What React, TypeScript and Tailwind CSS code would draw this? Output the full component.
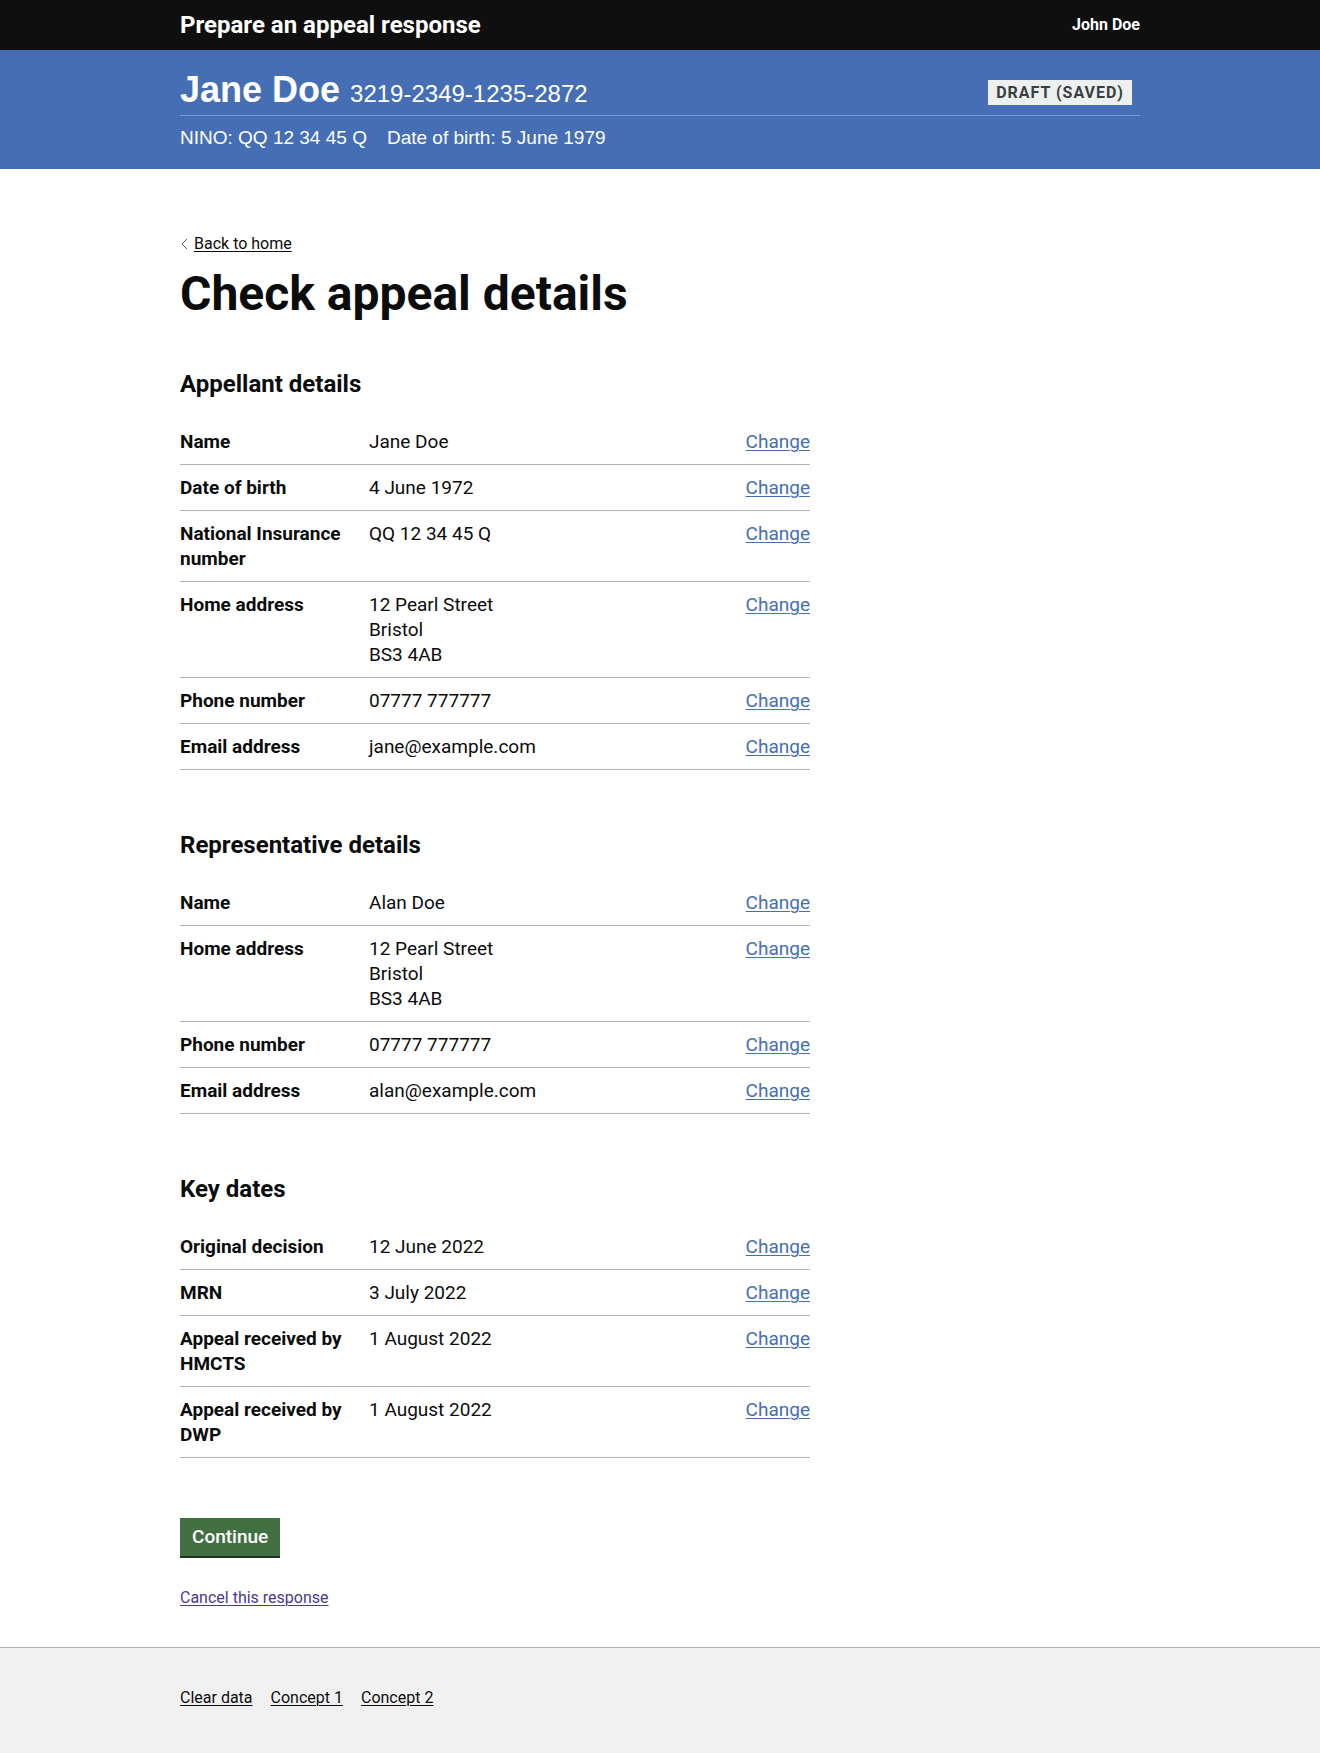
type Row = { label: string; value: string[] };
type Section = { id: string; title: string; rows: Row[] };

const sections: Section[] = [
  {
    id: "appellant",
    title: "Appellant details",
    rows: [
      { label: "Name", value: ["Jane Doe"] },
      { label: "Date of birth", value: ["4 June 1972"] },
      { label: "National Insurance number", value: ["QQ 12 34 45 Q"] },
      { label: "Home address", value: ["12 Pearl Street", "Bristol", "BS3 4AB"] },
      { label: "Phone number", value: ["07777 777777"] },
      { label: "Email address", value: ["jane@example.com"] },
    ],
  },
  {
    id: "representative",
    title: "Representative details",
    rows: [
      { label: "Name", value: ["Alan Doe"] },
      { label: "Home address", value: ["12 Pearl Street", "Bristol", "BS3 4AB"] },
      { label: "Phone number", value: ["07777 777777"] },
      { label: "Email address", value: ["alan@example.com"] },
    ],
  },
  {
    id: "key-dates",
    title: "Key dates",
    rows: [
      { label: "Original decision", value: ["12 June 2022"] },
      { label: "MRN", value: ["3 July 2022"] },
      { label: "Appeal received by HMCTS", value: ["1 August 2022"] },
      { label: "Appeal received by DWP", value: ["1 August 2022"] },
    ],
  },
];

const footerLinks = ["Clear data", "Concept 1", "Concept 2"];

function SummaryList({ section }: { section: Section }) {
  return (
    <section aria-labelledby={section.id} className="mb-[60px]">
      <h2 id={section.id} className="mb-5 text-2xl leading-[30px] font-bold">
        {section.title}
      </h2>
      <dl className="text-[19px] leading-[25px]">
        {section.rows.map((row) => (
          <div key={row.label} className="flex border-b border-[#b1b4b6] py-2.5">
            <dt className="w-[30%] shrink-0 pr-5 font-bold">{row.label}</dt>
            <dd className="min-w-0 flex-1 pr-5">
              {row.value.map((line) => (
                <span key={line} className="block">
                  {line}
                </span>
              ))}
            </dd>
            <dd>
              <a
                href="#"
                aria-label={`Change ${row.label}`}
                className="text-[#456eb4] underline decoration-1 underline-offset-2"
              >
                Change
              </a>
            </dd>
          </div>
        ))}
      </dl>
    </section>
  );
}

export default function App() {
  return (
    <div className="bg-white font-['Roboto','Liberation_Sans',sans-serif] text-[#0b0c0c]">
      <header className="bg-[#0f0f0f] text-white">
        <div className="mx-auto flex min-h-[50px] max-w-[1020px] items-center justify-between px-[30px] font-bold">
          <span className="text-2xl leading-[30px]">Prepare an appeal response</span>
          <span className="text-base leading-5">John Doe</span>
        </div>
      </header>

      <div className="bg-[#456eb4] font-['Liberation_Sans',Arial,sans-serif] text-white">
        <div className="mx-auto max-w-[1020px] px-[30px] pt-5 pb-[19px]">
          <div className="flex flex-wrap items-center justify-between border-b border-[#7a9ada] pb-[5px]">
            <p className="flex flex-wrap items-baseline gap-x-2.5">
              <strong className="text-4xl leading-10 font-bold">Jane Doe</strong>
              <span className="text-2xl leading-[30px]">3219-2349-1235-2872</span>
            </p>
            <strong className="mt-1 mr-2 bg-[#eeefef] px-2 py-0.5 font-['Roboto',sans-serif] text-base leading-[21px] font-bold tracking-[1px] text-[#383f43] uppercase">
              Draft (saved)
            </strong>
          </div>
          <p className="flex flex-wrap gap-x-5 pt-[9px] text-[19px] leading-[25px]">
            <span>NINO: QQ 12 34 45 Q</span>
            <span>Date of birth: 5 June 1979</span>
          </p>
        </div>
      </div>

      <main className="mx-auto max-w-[1020px] px-[30px] pt-[65px] pb-[39px]">
        <a href="#" className="flex w-fit items-center text-base leading-5">
          <svg className="mr-1.5 h-3 w-2" viewBox="0 0 8 12" fill="none" stroke="#505a5f" aria-hidden="true">
            <path d="M7 1 2 6l5 5" />
          </svg>
          <span className="underline decoration-1 underline-offset-2">Back to home</span>
        </a>
        <h1 className="mt-[15px] mb-[50px] text-5xl leading-[50px] font-bold">Check appeal details</h1>

        <div className="max-w-[630px]">
          {sections.map((section) => (
            <SummaryList key={section.id} section={section} />
          ))}
        </div>

        <button
          type="button"
          className="block border-b-2 border-[#1d3320] bg-[#437043] px-3 py-[9px] text-[19px] leading-5 font-medium text-white"
        >
          Continue
        </button>
        <a
          href="#"
          className="mt-[30px] block w-fit text-base leading-5 text-[#4c3a8a] underline decoration-1 underline-offset-2"
        >
          Cancel this response
        </a>
      </main>

      <footer className="border-t border-[#b1b4b6] bg-[#f1f1f1]">
        <nav
          aria-label="Prototype"
          className="mx-auto flex max-w-[1020px] flex-wrap gap-x-[18px] px-[30px] pt-10 pb-[45px] text-base leading-5"
        >
          {footerLinks.map((link) => (
            <a key={link} href="#" className="underline decoration-1 underline-offset-2">
              {link}
            </a>
          ))}
        </nav>
      </footer>
    </div>
  );
}
